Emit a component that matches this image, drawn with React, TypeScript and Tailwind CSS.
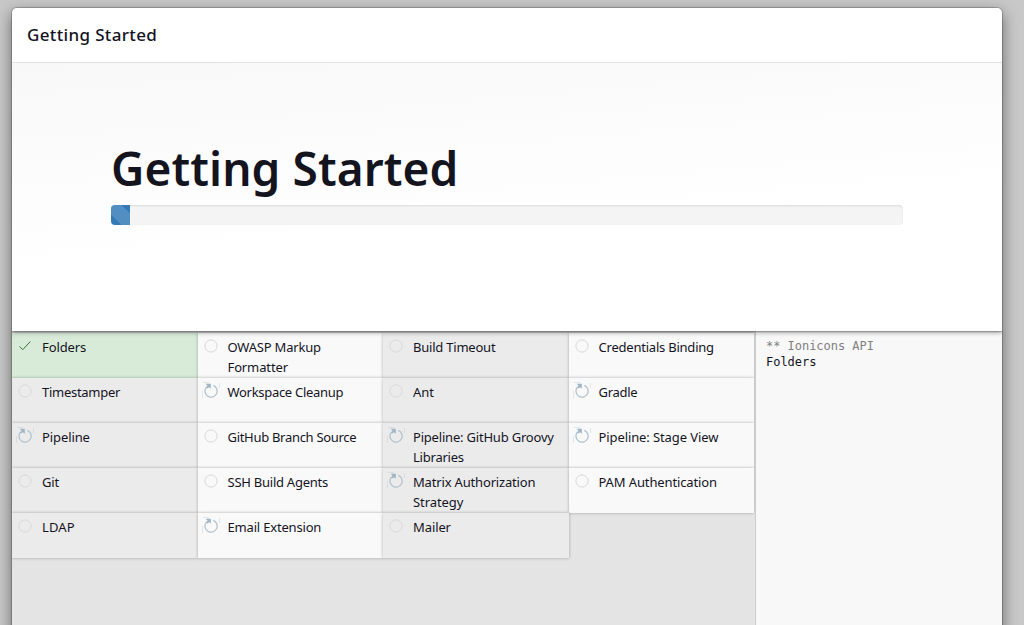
import React from "react";

type Status = "done" | "idle" | "busy";
type Line = { text: string; tracking: string };
type Plugin = { lines: Line[]; status: Status };

const plugins: Plugin[] = [
  { lines: [{ text: "Folders", tracking: "tracking-[-0.1px]" }], status: "done" },
  { lines: [{ text: "OWASP Markup", tracking: "tracking-[-0.2px]" }, { text: "Formatter", tracking: "tracking-[-0.12px]" }], status: "idle" },
  { lines: [{ text: "Build Timeout", tracking: "tracking-[-0.22px]" }], status: "idle" },
  { lines: [{ text: "Credentials Binding", tracking: "tracking-[-0.22px]" }], status: "idle" },
  { lines: [{ text: "Timestamper", tracking: "tracking-[-0.28px]" }], status: "idle" },
  { lines: [{ text: "Workspace Cleanup", tracking: "tracking-[-0.3px]" }], status: "busy" },
  { lines: [{ text: "Ant", tracking: "tracking-[0px]" }], status: "idle" },
  { lines: [{ text: "Gradle", tracking: "tracking-[-0.3px]" }], status: "busy" },
  { lines: [{ text: "Pipeline", tracking: "tracking-[-0.1px]" }], status: "busy" },
  { lines: [{ text: "GitHub Branch Source", tracking: "tracking-[-0.3px]" }], status: "idle" },
  { lines: [{ text: "Pipeline: GitHub Groovy", tracking: "tracking-[-0.2px]" }, { text: "Libraries", tracking: "tracking-[-0.22px]" }], status: "busy" },
  { lines: [{ text: "Pipeline: Stage View", tracking: "tracking-[-0.1px]" }], status: "busy" },
  { lines: [{ text: "Git", tracking: "tracking-[-0.2px]" }], status: "idle" },
  { lines: [{ text: "SSH Build Agents", tracking: "tracking-[-0.25px]" }], status: "idle" },
  { lines: [{ text: "Matrix Authorization", tracking: "tracking-[-0.17px]" }, { text: "Strategy", tracking: "tracking-[-0.08px]" }], status: "busy" },
  { lines: [{ text: "PAM Authentication", tracking: "tracking-[-0.12px]" }], status: "idle" },
  { lines: [{ text: "LDAP", tracking: "tracking-[0.1px]" }], status: "idle" },
  { lines: [{ text: "Email Extension", tracking: "tracking-[-0.18px]" }], status: "busy" },
  { lines: [{ text: "Mailer", tracking: "tracking-[-0.1px]" }], status: "idle" },
];

function StatusIcon({ status }: { status: Status }) {
  return (
    <svg className="mt-[4px] ml-[4px] h-[18px] w-[18px] shrink-0" viewBox="0 0 18 18" fill="none">
      {status === "done" && <path d="M3.5 9.5 L6.8 12.7 L14.3 4.5" stroke="#3c6e40" strokeWidth="1" />}
      {status === "idle" && <circle cx="9" cy="9" r="6.1" stroke="#d9d9d9" strokeWidth="1" />}
      {status === "busy" && (
        <g stroke="#b4c3ce">
          <path d="M11.3 3.4 A6.1 6.1 0 1 1 4.6 4.9" strokeWidth="1.3" />
          <path d="M3.6 1.8 H8.8 V6.8 L7 5.2 L5 6.6 L4 5.6 L5.6 3.8 Z" fill="#9fb5c5" stroke="none" />
          <path d="M1 .5 H7 M.5 9 V16 M17.5 1 V6" strokeWidth=".6" opacity=".6" />
        </g>
      )}
    </svg>
  );
}

export default function App() {
  return (
    <div className="flex h-[625px] w-[1024px] overflow-hidden bg-[#c8c8c8] pt-[8px] pl-[12px] font-['Noto_Sans',sans-serif] text-[#14141f]">
      <div className="flex h-[650px] w-[990px] shrink-0 flex-col overflow-hidden rounded-t-[5px] bg-[#e4e4e4] shadow-[0_0_0_1px_rgba(0,0,0,0.2),0_5px_15px_rgba(0,0,0,0.5)]">
        <header className="relative z-20 flex h-[55px] shrink-0 items-center border-b border-[#e2e2e2] bg-white pl-[15px]">
          <span className="text-[17px] font-medium tracking-[0.35px]">Getting Started</span>
        </header>
        <section className="relative z-10 h-[268px] shrink-0 bg-[linear-gradient(175deg,#f8f8f8_0%,#ffffff_60%)] px-[99px] pt-[75px] shadow-[0_1px_1px_rgba(0,0,0,0.2),0_1px_5px_rgba(0,0,0,0.45)]">
          <h1 className="h-[67px] text-[46px] leading-[60px] font-semibold tracking-[0.1px] whitespace-nowrap">Getting Started</h1>
          <div className="h-[20px] w-[792px] overflow-hidden rounded-[4px] bg-[#f4f4f4] shadow-[inset_0_1px_2px_rgba(0,0,0,0.1)]">
            <div className="h-full w-[19px] bg-[#337ab7] bg-[linear-gradient(45deg,rgba(255,255,255,.15)_25%,transparent_25%,transparent_50%,rgba(255,255,255,.15)_50%,rgba(255,255,255,.15)_75%,transparent_75%,transparent)] bg-[length:40px_40px] bg-[position:-9px_0px]" />
          </div>
        </section>
        <main className="flex min-h-0 flex-1">
          <div className="w-[743px] shrink-0 pt-[2px]">
            <div className="grid w-[742px] auto-rows-[45px] grid-cols-4">
              {plugins.map((p, i) => (
                <div
                  key={p.lines[0].text}
                  className={`flex shadow-[0_0_3px_rgba(0,0,0,0.3)] ${p.status === "done" ? "bg-[#d8ebd8]" : i % 2 ? "bg-[#f9f9f9]" : "bg-[#ebebeb]"}`}
                >
                  <StatusIcon status={p.status} />
                  <div className="flex flex-col items-start pt-[4px] pl-[8px] text-[13px] leading-[20px] whitespace-nowrap">
                    {p.lines.map((line) => (
                      <span key={line.text} className={line.tracking}>{line.text}</span>
                    ))}
                  </div>
                </div>
              ))}
            </div>
          </div>
          <aside className="flex-1 border-l border-[#cccccc] bg-[#f8f8f8] pt-[7px] pl-[10px] font-['DejaVu_Sans_Mono',monospace] text-[12px] leading-[16px] tracking-[-0.03px]">
            <div className="text-[#808080]">** Ionicons API</div>
            <div>Folders</div>
          </aside>
        </main>
      </div>
    </div>
  );
}
